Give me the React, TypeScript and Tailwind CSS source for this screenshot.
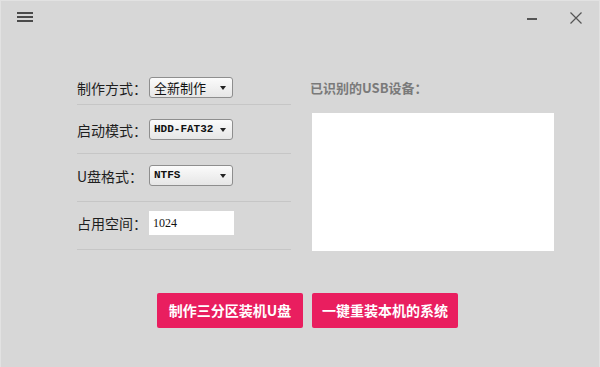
import React from "react";

const cjk = { fontFamily: '"Noto Sans CJK SC", "Noto Sans", sans-serif' };

// 下拉框（模拟 Windows 旧式 combobox）
const Combo: React.FC<{ value: string; mono?: boolean }> = ({ value, mono }) => (
  <div className="flex h-[21px] w-[84px] items-center justify-between rounded-[3px] border border-[#8e8e8e] bg-gradient-to-b from-[#fbfbfb] to-[#e6e6e6] pl-[4px] pr-[6px]">
    <span
      className={mono ? "text-[11px] font-bold text-[#111]" : "text-[13px] leading-none text-[#111]"}
      style={mono ? { fontFamily: '"Liberation Mono", monospace' } : cjk}>
      {value}
    </span>
    <span className="h-0 w-0 border-x-[3px] border-t-[4px] border-x-transparent border-t-[#222]" />
  </div>
);

const Row: React.FC<{ label: string; className: string; children: React.ReactNode }> = ({ label, className, children }) => (
  <div className={`flex items-center border-b border-[#c6c6c6] ${className}`}>
    <span className="w-[72px] text-[14px] leading-none text-[#1e1e1e]" style={cjk}>
      {label}
    </span>
    {children}
  </div>
);

export default function App() {
  return (
    <div className="flex h-[367px] w-[600px] flex-col border-x border-t border-[#e2e2e2] bg-[#d7d7d7]" style={cjk}>
      {/* 标题栏 */}
      <div className="flex h-[33px] items-start">
        <div className="ml-[16px] mt-[11px] flex w-[16px] flex-col gap-[2px]">
          <span className="h-[2px] bg-[#4a4a4a]" />
          <span className="h-[2px] bg-[#4a4a4a]" />
          <span className="h-[2px] bg-[#4a4a4a]" />
        </div>
        <div className="ml-auto mr-[17px] mt-[11px] flex items-center gap-[33px]">
          <span className="mt-[1px] h-[2px] w-[10px] bg-[#555]" />
          <svg width="12" height="12" viewBox="0 0 12 12" className="block">
            <path d="M0.5 0.5 L11.5 11.5 M11.5 0.5 L0.5 11.5" stroke="#555" strokeWidth="1.2" />
          </svg>
        </div>
      </div>

      {/* 主体 */}
      <div className="ml-[76px] mt-[43px] flex gap-[19px]">
        <div className="flex w-[214px] flex-col">
          <Row label="制作方式：" className="pb-[6px]">
            <Combo value="全新制作" />
          </Row>
          <Row label="启动模式：" className="pb-[13px] pt-[14px]">
            <Combo value="HDD-FAT32" mono />
          </Row>
          <Row label="U盘格式：" className="pb-[15px] pt-[11px]">
            <Combo value="NTFS" mono />
          </Row>
          <Row label="占用空间：" className="pb-[14px] pt-[9px]">
            <div className="flex h-[24px] w-[85px] items-center bg-white pl-[4px]">
              <span className="text-[12px] text-[#111]" style={{ fontFamily: '"Liberation Serif", serif' }}>
                1024
              </span>
            </div>
          </Row>
        </div>

        <div className="flex flex-col">
          <span className="mt-[4px] text-[13px] font-bold leading-none text-[#7a7a7a]">已识别的USB设备：</span>
          <div className="ml-[2px] mt-[19px] h-[138px] w-[242px] bg-white" />
        </div>
      </div>

      {/* 按钮 */}
      <div className="mt-[42px] flex justify-center gap-[9px] pl-[15px]">
        <button className="h-[35px] w-[146px] rounded-[2px] bg-[#e91e5f] text-[14px] font-bold text-white">
          制作三分区装机U盘
        </button>
        <button className="h-[35px] w-[146px] rounded-[2px] bg-[#e91e5f] text-[14px] font-bold text-white">
          一键重装本机的系统
        </button>
      </div>
    </div>
  );
}
